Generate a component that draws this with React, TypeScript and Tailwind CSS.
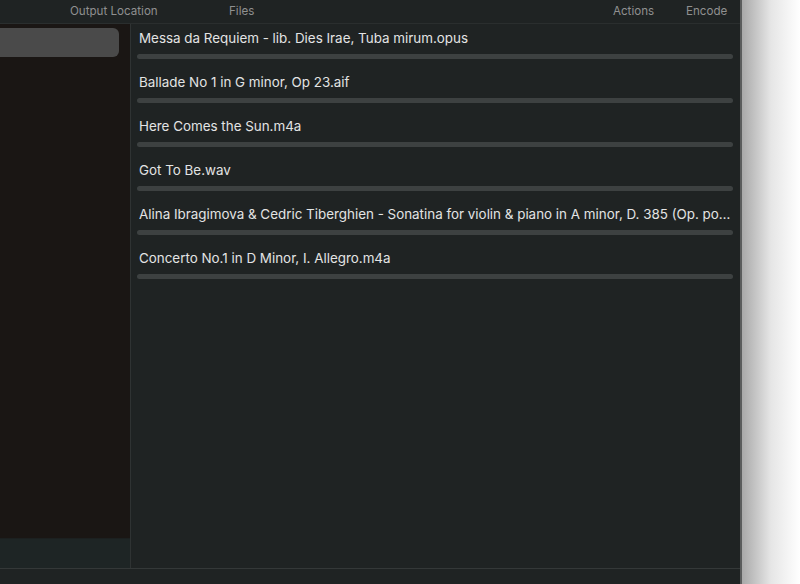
const files = [
  'Messa da Requiem - lib. Dies Irae, Tuba mirum.opus',
  'Ballade No 1 in G minor, Op 23.aif',
  'Here Comes the Sun.m4a',
  'Got To Be.wav',
  'Alina Ibragimova & Cedric Tiberghien - Sonatina for violin & piano in A minor, D. 385 (Op. posth. 137 No. 2) - I. Allegro moderato.flac',
  'Concerto No.1 in D Minor, I. Allegro.m4a',
];

export default function App() {
  return (
    <div className="flex h-[584px] w-[800px] overflow-hidden bg-white font-['Inter','Liberation_Sans',sans-serif]">
      {/* Window */}
      <div className="flex h-full w-[740px] flex-col bg-[#1f2323]">
        {/* Toolbar */}
        <div className="relative h-[24px] shrink-0 border-b border-[#2a2e2e] text-[11.6px] text-[#8f9090]">
          <span className="absolute left-[70px] top-[3px]">Output Location</span>
          <span className="absolute left-[229px] top-[3px]">Files</span>
          <span className="absolute left-[613px] top-[3px]">Actions</span>
          <span className="absolute left-[686px] top-[3px]">Encode</span>
        </div>

        <div className="flex min-h-0 flex-1">
          {/* Sidebar */}
          <div className="flex w-[131px] shrink-0 flex-col border-r border-[#2f3333]">
            <div className="flex-1 bg-[#1a1614] pr-[11px] pt-[4px]">
              <div className="-ml-[8px] h-[29px] rounded-[6px] bg-[#4a4a4a]" />
            </div>
            <div className="h-[30px] shrink-0 border-t border-[#1c2020] bg-[#1e2525]" />
          </div>

          {/* File list */}
          <div className="min-w-0 flex-1 pl-[6px] pr-[7px] pt-[6px]">
            {files.map((f) => (
              <div key={f} className="flex h-[44px] flex-col">
                <div className="ml-[2px] truncate text-[13.4px] leading-[16px] text-[#e3e4e4]">{f}</div>
                <div className="mt-[8px] h-[5px] rounded-full bg-[#3d4141]" />
              </div>
            ))}
          </div>
        </div>

        {/* Bottom bar */}
        <div className="h-[16px] shrink-0 border-t border-[#343838] bg-[#1f2323]" />
      </div>

      {/* Window edge + shadow */}
      <div className="h-full w-[2px] bg-[#5b5d5d]" />
      <div className="h-full flex-1 bg-gradient-to-r from-[#a9a9a9] via-[#e6e6e6] to-white" />
    </div>
  );
}
